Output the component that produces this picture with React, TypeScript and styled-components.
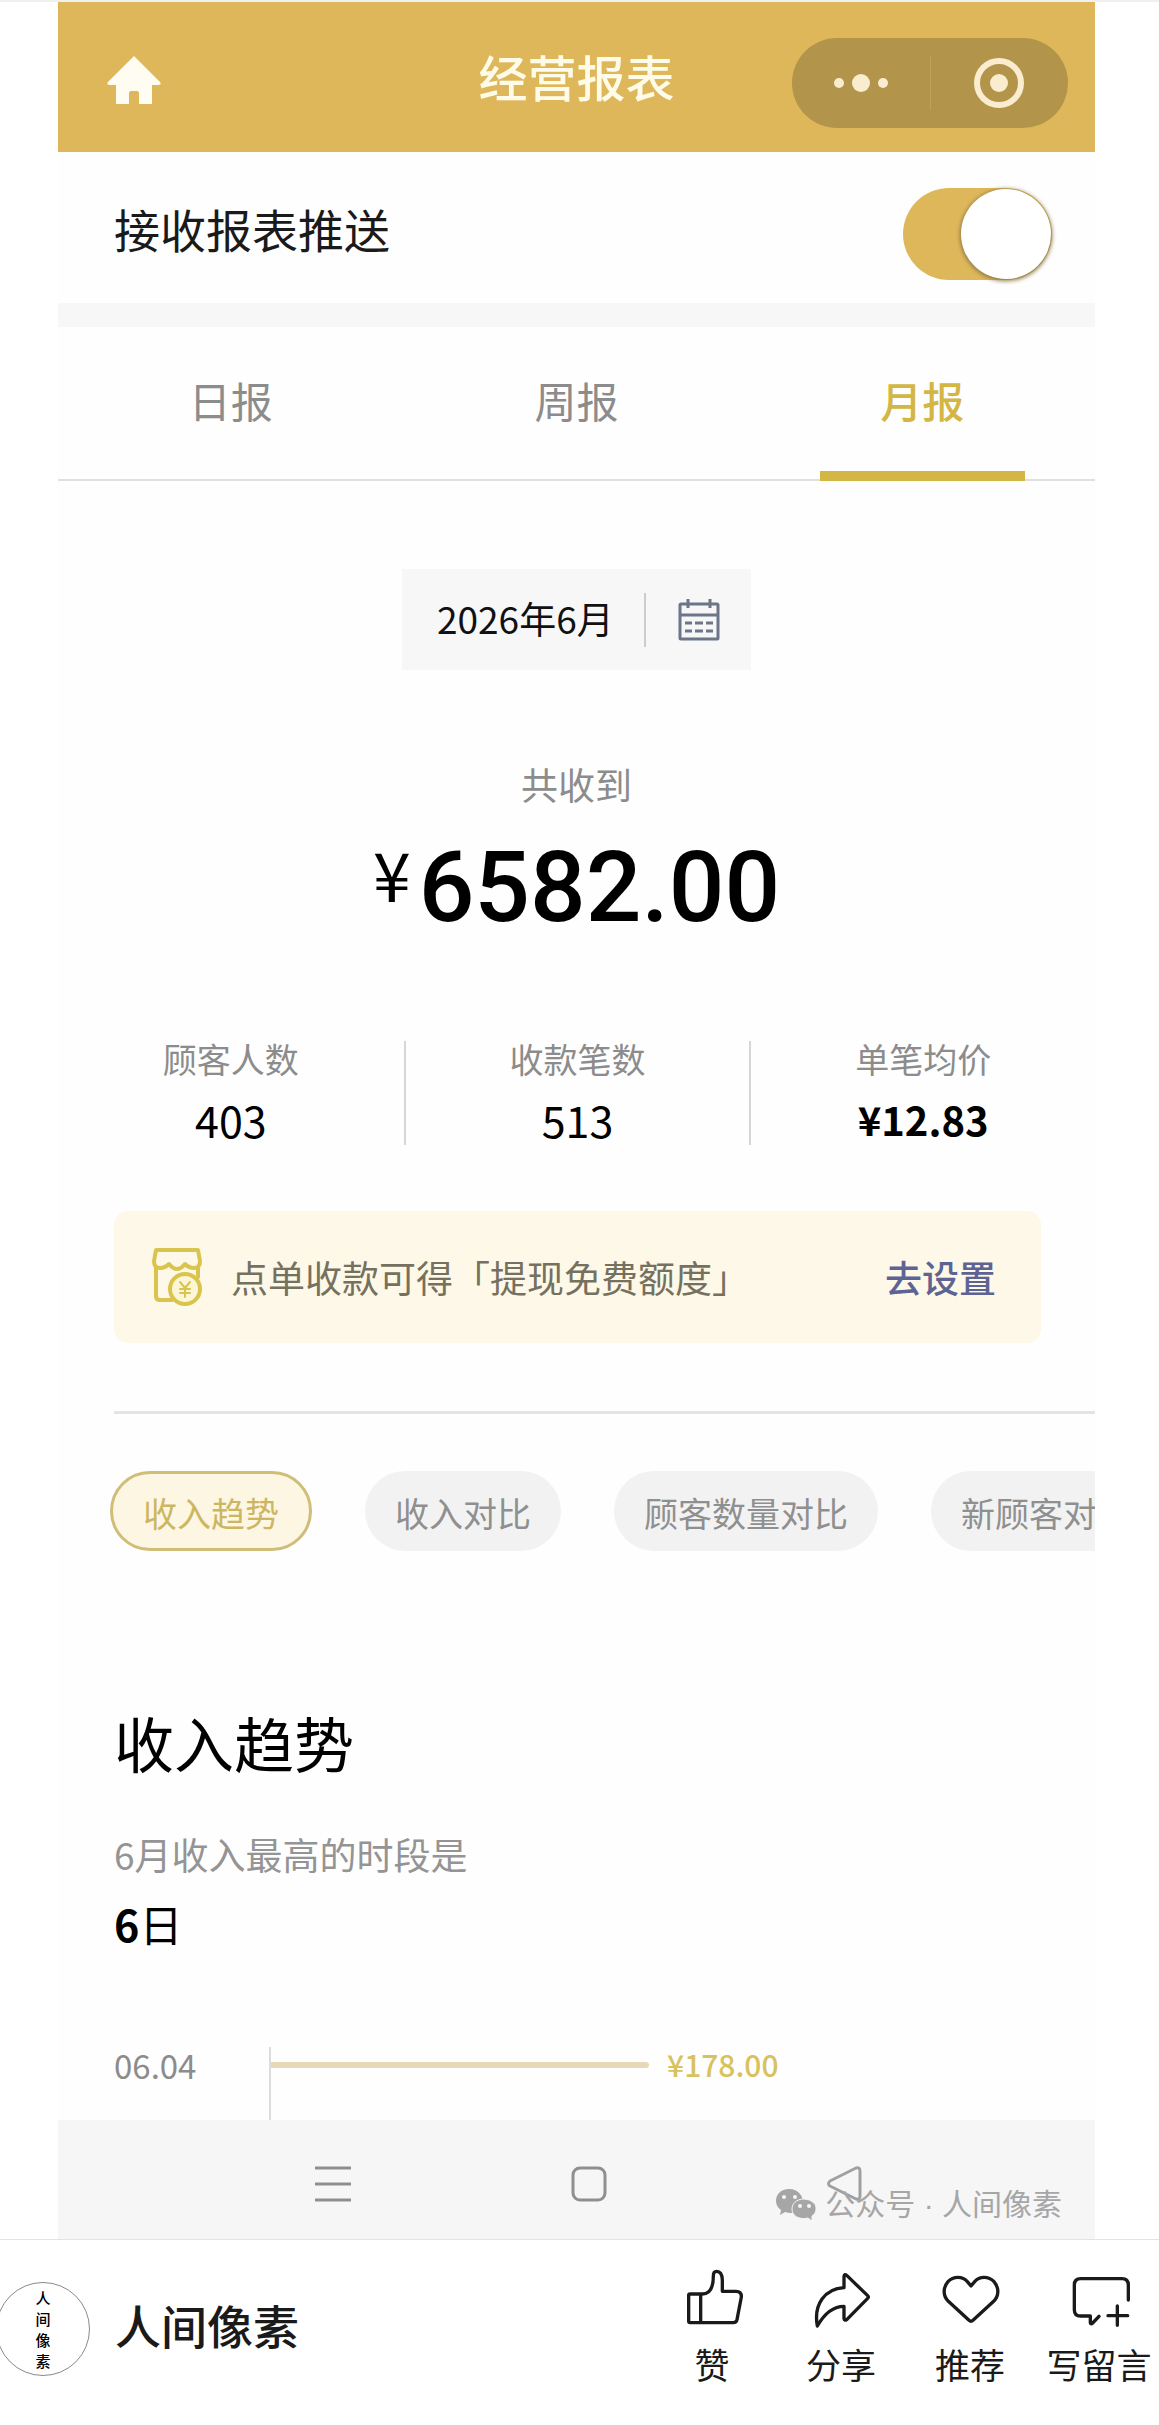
import React, { useState } from 'react';
import styled, { createGlobalStyle } from 'styled-components';

const GlobalStyle = createGlobalStyle`
  *, *::before, *::after { box-sizing: border-box; }
  body {
    margin: 0;
    background: #ffffff;
    color: #1a1a1a;
    font-family: "Noto Sans CJK SC", "Noto Sans", sans-serif;
  }
  button {
    margin: 0;
    padding: 0;
    border: 0;
    background: none;
    color: inherit;
    font: inherit;
    cursor: pointer;
  }
  h1, h2, p, dl, dt, dd, ul { margin: 0; padding: 0; font-weight: 400; }
  svg { display: block; }
`;

const Page = styled.div`
  border-top: 2px solid #f0f0f0;
  overflow: hidden;
`;

const Screen = styled.main`
  margin: 0 64px 0 58px;
  background: #fefefe;
`;

const Header = styled.header`
  display: grid;
  grid-template-columns: 1fr auto 1fr;
  align-items: center;
  height: 150px;
  padding: 6px 27px 0;
  background: #dfb75b;
`;

const HeaderTitle = styled.h1`
  padding-bottom: 8px;
  color: #fffbe9;
  font-size: 49px;
  font-weight: 500;
  line-height: 72px;
`;

const HomeButton = styled.button`
  justify-self: start;
  padding-left: 21px;
`;

const Capsule = styled.div`
  display: flex;
  justify-self: end;
  align-items: center;
  width: 276px;
  height: 90px;
  margin-top: 6px;
  border-radius: 45px;
  background: #b2954b;
`;

const CapsuleButton = styled.button`
  display: flex;
  flex: 1;
  align-items: center;
  justify-content: center;
  height: 54px;

  & + & { border-left: 1px solid #bea25a; }
`;

const PushRow = styled.label`
  display: flex;
  align-items: center;
  justify-content: space-between;
  height: 151px;
  padding: 0 43px 0 56px;
  font-size: 46px;
  line-height: 68px;
`;

const Toggle = styled.input`
  appearance: none;
  display: flex;
  align-items: center;
  width: 149px;
  height: 92px;
  margin: 12px 0 0;
  border-radius: 46px;
  background: ${(p) => (p.checked ? '#dfb75b' : '#dddddd')};

  &::before {
    content: "";
    width: 90px;
    height: 90px;
    margin-left: ${(p) => (p.checked ? '58px' : '1px')};
    border-radius: 50%;
    background: #ffffff;
    box-shadow: 0 1px 4px 1px #8c7a45;
  }
`;

const Band = styled.div`
  height: 24px;
  background: #f7f7f7;
`;

const Tabs = styled.nav`
  display: grid;
  grid-template-columns: repeat(3, 1fr);
  height: 154px;
  border-bottom: 2px solid #e0e0e0;
`;

const Tab = styled.button<{ $active: boolean }>`
  display: flex;
  flex-direction: column;
  align-items: center;
  justify-content: space-between;
  height: 154px;
  padding-top: 42px;
  color: ${(p) => (p.$active ? '#d3b643' : '#8c8c8c')};
  font-size: 42px;
  font-weight: ${(p) => (p.$active ? 500 : 400)};
  line-height: 62px;

  &::after {
    content: "";
    width: 205px;
    height: 10px;
    background: ${(p) => (p.$active ? '#d3b643' : 'transparent')};
  }
`;

const DateButton = styled.button`
  display: flex;
  align-items: center;
  justify-content: space-between;
  width: 349px;
  height: 101px;
  margin: 88px auto 0;
  padding: 0 31px 0 35px;
  background: #f7f7f7;
  color: #111111;
  font-size: 37px;
  line-height: 54px;
`;

const DateText = styled.span`
  padding-bottom: 4px;
`;

const DateIcon = styled.span`
  display: flex;
  align-items: center;
  height: 54px;
  padding-left: 32px;
  border-left: 2px solid #cccccc;
`;

const Total = styled.section`
  margin-top: 87px;
  text-align: center;
`;

const TotalLabel = styled.p`
  color: #8c8c8c;
  font-size: 37px;
  line-height: 54px;
`;

const TotalAmount = styled.p`
  display: flex;
  align-items: flex-start;
  justify-content: center;
  height: 120px;
  margin-top: 17px;
  color: #000000;
  font-family: Roboto, "Noto Sans CJK SC", sans-serif;
  font-size: 98px;
  font-weight: 500;
  line-height: 120px;
`;

const Currency = styled.span`
  padding-right: 8px;
  font-family: "Noto Sans CJK SC", sans-serif;
  font-size: 68px;
  font-weight: 400;
  line-height: 90px;
`;

const Stats = styled.dl`
  display: grid;
  grid-template-columns: repeat(3, 1fr);
  margin-top: 93px;
`;

const Stat = styled.div`
  height: 104px;
  text-align: center;

  & + & { border-left: 2px solid #d6d6d6; }
`;

const StatLabel = styled.dt`
  color: #8c8c8c;
  font-size: 34px;
  line-height: 36px;
`;

const StatValue = styled.dd<{ $strong?: boolean }>`
  margin-top: 12px;
  color: #000000;
  font-size: ${(p) => (p.$strong ? 40 : 43)}px;
  font-weight: ${(p) => (p.$strong ? 700 : 400)};
  line-height: 60px;
`;

const Notice = styled.section`
  display: flex;
  align-items: center;
  height: 132px;
  margin: 66px 54px 0 56px;
  padding: 0 45px 0 38px;
  border-radius: 14px;
  background: #fdf8e7;
`;

const NoticeText = styled.p`
  flex: 1;
  padding-left: 29px;
  color: #76705f;
  font-size: 37px;
  line-height: 56px;
`;

const NoticeLink = styled.a`
  color: #5d6493;
  font-size: 37px;
  font-weight: 500;
  line-height: 56px;
  text-decoration: none;
`;

const Chips = styled.div`
  display: flex;
  gap: 53px;
  margin-left: 52px;
  overflow: hidden;
`;

const Divider = styled.hr`
  height: 3px;
  margin: 68px 0 57px 56px;
  border: 0;
  background: #e4e4e4;
`;

const Chip = styled.button<{ $active: boolean }>`
  flex: none;
  height: 80px;
  padding: 4px 30px 0;
  border: ${(p) => (p.$active ? '3px solid #cfbd78' : '0')};
  border-radius: 40px;
  background: ${(p) => (p.$active ? '#fcf6e3' : '#f2f2f2')};
  color: ${(p) => (p.$active ? '#cdb662' : '#8f8f8f')};
  font-size: 34px;
  line-height: 50px;
`;

const Trend = styled.section`
  padding: 147px 0 0 56px;
`;

const TrendTitle = styled.h2`
  color: #000000;
  font-size: 60px;
  line-height: 88px;
`;

const TrendHint = styled.p`
  margin-top: 40px;
  color: #949494;
  font-size: 37px;
  line-height: 56px;
`;

const TrendDay = styled.p`
  margin-top: 10px;
  color: #000000;
  font-size: 43px;
  line-height: 62px;

  b { font-weight: 700; }
`;

const ChartRow = styled.div`
  display: flex;
  height: 73px;
  margin-top: 93px;
  line-height: 36px;
`;

const ChartDate = styled.span`
  width: 155px;
  color: #8c8c8c;
  font-size: 33px;
`;

const ChartPlot = styled.div`
  display: flex;
  flex: 1;
  align-items: flex-start;
  border-left: 2px solid #dcdcdc;
`;

const ChartBar = styled.span`
  height: 6px;
  margin-top: 15px;
  border-radius: 0 3px 3px 0;
  background: #e6dab6;
`;

const ChartValue = styled.span`
  padding-left: 18px;
  color: #d8c260;
  font-size: 30px;
  font-weight: 500;
  line-height: 34px;
`;

const SystemBar = styled.nav`
  position: relative;
  display: flex;
  gap: 220px;
  height: 119px;
  padding: 46px 0 0 257px;
  background: #f6f6f6;

  button { height: 36px; }
`;

const Watermark = styled.p`
  position: absolute;
  right: 33px;
  bottom: 12px;
  display: flex;
  gap: 8px;
  align-items: center;
  color: #a6a6a6;
  font-family: "Liberation Sans", "Noto Sans CJK SC", sans-serif;
  font-size: 30px;
  line-height: 44px;
`;

const Footer = styled.footer`
  display: flex;
  align-items: flex-start;
  height: 184px;
  padding-right: 7px;
  border-top: 1px solid #e3e3e3;
  background: #ffffff;
`;

const Avatar = styled.div`
  display: flex;
  align-items: center;
  justify-content: center;
  width: 94px;
  height: 94px;
  margin: 42px 0 0 -4px;
  border: 1px solid #8a8a8a;
  border-radius: 50%;
  color: #000000;
`;

const AvatarText = styled.span`
  width: 15px;
  font-size: 15px;
  font-weight: 500;
  line-height: 21px;
  word-break: break-all;
`;

const Author = styled.a`
  flex: 1;
  margin: 50px 0 0 25px;
  color: #1a1a1a;
  font-size: 46px;
  font-weight: 500;
  line-height: 68px;
  text-decoration: none;
`;

const Actions = styled.div`
  display: flex;
  gap: 23px;
  padding-top: 26px;
`;

const Action = styled.button`
  display: flex;
  flex-direction: column;
  align-items: center;
  width: 106px;
  font-size: 35px;
  line-height: 52px;
  white-space: nowrap;

  svg { margin-bottom: 8px; }
`;

const HomeIcon = () => (
  <svg width="56" height="50" viewBox="0 0 56 50" fill="#fffdf2" aria-hidden="true">
    <path d="M28 1 L54 27 Q56 30 52 30 H46 V49 H33 V38 Q33 36 31 36 H25 Q23 36 23 38 V49 H10 V30 H4 Q0 30 2 27 Z" />
  </svg>
);

const DotsIcon = () => (
  <svg width="58" height="20" viewBox="0 0 58 20" fill="#faedcf" aria-hidden="true">
    <circle cx="7" cy="10" r="5" />
    <circle cx="29" cy="10" r="9" />
    <circle cx="51" cy="10" r="5" />
  </svg>
);

const TargetIcon = () => (
  <svg width="54" height="54" viewBox="0 0 54 54" aria-hidden="true">
    <circle cx="27" cy="27" r="22" fill="none" stroke="#faedcf" strokeWidth="6" />
    <circle cx="27" cy="27" r="9" fill="#faedcf" />
  </svg>
);

const CalendarIcon = () => (
  <svg width="42" height="42" viewBox="0 0 42 42" fill="none" stroke="#6b7789" strokeWidth="3" aria-hidden="true">
    <rect x="2" y="5" width="38" height="35" rx="1" />
    <path d="M2 16 H40 M10 0 V9 M32 0 V9" />
    <path d="M7 24 H14 M17 24 H25 M28 24 H35 M7 32 H14 M17 32 H25 M28 32 H35" />
  </svg>
);

const ShopIcon = () => (
  <svg width="50" height="58" viewBox="0 0 50 58" fill="none" stroke="#d9c44e" strokeWidth="4" strokeLinejoin="round" strokeLinecap="round" aria-hidden="true">
    <path d="M4 2 H46 L48 13 Q48 20 42 20 Q37 20 33 16 Q29 21 25 21 Q21 21 17 16 Q13 20 8 20 Q2 20 2 13 Z" />
    <path d="M4 20 V48 Q4 52 8 52 H20 M46 20 V29" />
    <circle cx="33" cy="41" r="15" fill="#fdf6d6" />
    <path d="M28 34 L33 40 L38 34 M33 40 V49 M28 41 H38 M28 45 H38" strokeWidth="2" />
  </svg>
);

const MenuIcon = () => (
  <svg width="36" height="36" viewBox="0 0 36 36" stroke="#8f8f8f" strokeWidth="3" aria-hidden="true">
    <path d="M0 2 H36 M0 18 H36 M0 34 H36" />
  </svg>
);

const SquareIcon = () => (
  <svg width="36" height="36" viewBox="0 0 36 36" fill="none" stroke="#8f8f8f" strokeWidth="3" aria-hidden="true">
    <rect x="2" y="2" width="32" height="32" rx="7" />
  </svg>
);

const BackIcon = () => (
  <svg width="36" height="36" viewBox="0 0 36 36" fill="none" stroke="#a0a0a0" strokeWidth="3" strokeLinejoin="round" aria-hidden="true">
    <path d="M3 15 Q0 18 3 20 L29 33 Q33 34 33 30 V5 Q33 1 29 2 Z" />
  </svg>
);

const WechatIcon = () => (
  <svg width="42" height="34" viewBox="0 0 42 34" aria-hidden="true">
    <path d="M14 1 C6 1 1 6 1 13 C1 17 3 20 6 22 L5 27 L10 24 Q16 26 22 24 C28 21 30 12 25 6 Q21 1 14 1Z" fill="#a6a6a6" />
    <path d="M29 11 C21 11 17 16 17 21 C17 28 24 32 33 30 L37 33 L37 28 C42 25 42 18 39 15 Q35 11 29 11Z" fill="#a6a6a6" stroke="#f6f6f6" strokeWidth="1" />
    <g fill="#f6f6f6">
      <circle cx="9" cy="9" r="2" />
      <circle cx="20" cy="9" r="2" />
      <circle cx="25" cy="18" r="2" />
      <circle cx="34" cy="18" r="2" />
    </g>
  </svg>
);

const actions = [
  {
    label: '赞',
    path: 'M62 84 H30 Q26 84 26 88 V166 Q26 170 30 170 H160 Q169 170 171 161 L184 93 Q185 76 168 76 H127 V42 Q126 16 110 16 Q100 16 100 30 Q100 84 67 84 H62 V170',
  },
  {
    label: '分享',
    path: 'M25 180 C13 115 48 68 105 65 V31 Q106 22 114 29 L176 89 Q180 93 176 97 L114 160 Q106 166 105 158 V121 C70 121 45 145 25 180 Z',
  },
  {
    label: '推荐',
    path: 'M99 60 L88 47 C74 30 46 30 30 47 C14 66 15 90 31 106 L93 163 Q99 168 105 163 L167 106 C183 90 184 66 168 47 C152 30 124 30 110 47 Z',
  },
  {
    label: '写留言',
    path: 'M184 102 V57 Q184 38 165 38 H41 Q22 38 22 57 V131 Q22 150 41 150 H70 V170 Q71 177 77 171 L96 151 M123 149 H182 M151 120 V178',
  },
];

const tabs = ['日报', '周报', '月报'];
const charts = ['收入趋势', '收入对比', '顾客数量对比', '新顾客对比'];

const stats = [
  { label: '顾客人数', value: '403' },
  { label: '收款笔数', value: '513' },
  { label: '单笔均价', value: '¥12.83', strong: true },
];

const days = [{ date: '06.04', amount: 178 }];
const FULL_SCALE = 388;

export default function App() {
  const [push, setPush] = useState(true);
  const [tab, setTab] = useState('月报');
  const [chart, setChart] = useState('收入趋势');

  return (
    <Page>
      <GlobalStyle />
      <Screen>
        <Header>
          <HomeButton aria-label="首页"><HomeIcon /></HomeButton>
          <HeaderTitle>经营报表</HeaderTitle>
          <Capsule>
            <CapsuleButton aria-label="更多"><DotsIcon /></CapsuleButton>
            <CapsuleButton aria-label="关闭"><TargetIcon /></CapsuleButton>
          </Capsule>
        </Header>

        <PushRow>
          接收报表推送
          <Toggle type="checkbox" checked={push} onChange={() => setPush(!push)} />
        </PushRow>
        <Band />

        <Tabs>
          {tabs.map((name) => (
            <Tab key={name} $active={name === tab} onClick={() => setTab(name)}>{name}</Tab>
          ))}
        </Tabs>

        <DateButton>
          <DateText>2026年6月</DateText>
          <DateIcon><CalendarIcon /></DateIcon>
        </DateButton>

        <Total>
          <TotalLabel>共收到</TotalLabel>
          <TotalAmount><Currency>¥</Currency>6582.00</TotalAmount>
        </Total>

        <Stats>
          {stats.map((s) => (
            <Stat key={s.label}>
              <StatLabel>{s.label}</StatLabel>
              <StatValue $strong={s.strong}>{s.value}</StatValue>
            </Stat>
          ))}
        </Stats>

        <Notice>
          <ShopIcon />
          <NoticeText>点单收款可得「提现免费额度」</NoticeText>
          <NoticeLink href="#settings">去设置</NoticeLink>
        </Notice>

        <Divider />
        <Chips>
          {charts.map((name) => (
            <Chip key={name} $active={name === chart} onClick={() => setChart(name)}>{name}</Chip>
          ))}
        </Chips>

        <Trend>
          <TrendTitle>收入趋势</TrendTitle>
          <TrendHint>6月收入最高的时段是</TrendHint>
          <TrendDay><b>6</b>日</TrendDay>
          {days.map((d) => (
            <ChartRow key={d.date}>
              <ChartDate>{d.date}</ChartDate>
              <ChartPlot>
                <ChartBar style={{ width: `${(d.amount / FULL_SCALE) * 100}%` }} />
                <ChartValue>¥{d.amount.toFixed(2)}</ChartValue>
              </ChartPlot>
            </ChartRow>
          ))}
        </Trend>

        <SystemBar>
          <button aria-label="菜单"><MenuIcon /></button>
          <button aria-label="主屏幕"><SquareIcon /></button>
          <button aria-label="返回"><BackIcon /></button>
          <Watermark><WechatIcon />公众号 · 人间像素</Watermark>
        </SystemBar>
      </Screen>

      <Footer>
        <Avatar><AvatarText>人间像素</AvatarText></Avatar>
        <Author href="#author">人间像素</Author>
        <Actions>
          {actions.map((a) => (
            <Action key={a.label}>
              <svg width="64" height="64" viewBox="0 0 192 192" fill="none" stroke="#1a1a1a" strokeWidth="10" strokeLinecap="round" strokeLinejoin="round" aria-hidden="true">
                <path d={a.path} />
              </svg>
              {a.label}
            </Action>
          ))}
        </Actions>
      </Footer>
    </Page>
  );
}
